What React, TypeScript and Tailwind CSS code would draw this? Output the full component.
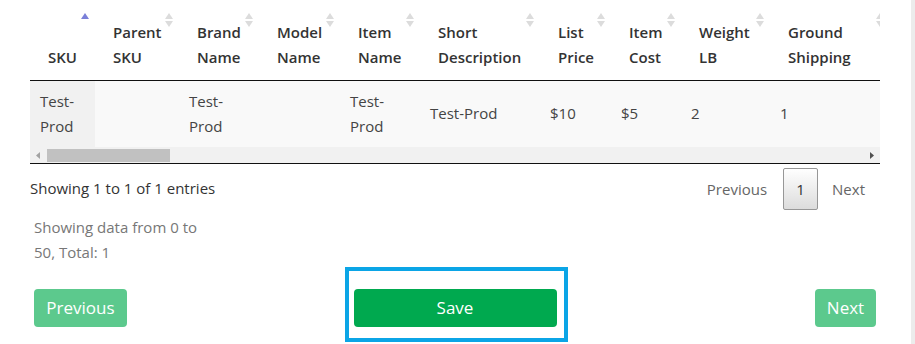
const columns = [
  { label: ['', 'SKU'], width: 'w-[65px]', active: true },
  { label: ['Parent', 'SKU'], width: 'w-[84px]' },
  { label: ['Brand', 'Name'], width: 'w-[80px]' },
  { label: ['Model', 'Name'], width: 'w-[81px]' },
  { label: ['Item', 'Name'], width: 'w-[80px]' },
  { label: ['Short', 'Description'], width: 'w-[120px]' },
  { label: ['List', 'Price'], width: 'w-[71px]' },
  { label: ['Item', 'Cost'], width: 'w-[70px]' },
  { label: ['Weight', 'LB'], width: 'w-[89px]' },
  { label: ['Ground', 'Shipping'], width: 'w-[120px]' },
];

const row: string[][] = [
  ['Test-', 'Prod'],
  [],
  ['Test-', 'Prod'],
  [],
  ['Test-', 'Prod'],
  ['Test-Prod'],
  ['$10'],
  ['$5'],
  ['2'],
  ['1'],
];

function SortIcon({ active }: { active?: boolean }) {
  if (active) {
    return (
      <svg width="8" height="14" viewBox="0 0 8 14" className="absolute right-[6px] top-[13px]">
        <path d="M4 0 L8 6 L0 6 Z" fill="#7b80d9" />
      </svg>
    );
  }
  return (
    <svg width="8" height="14" viewBox="0 0 8 14" className="absolute right-[6px] top-[13px]">
      <path d="M4 0 L8 6 L0 6 Z" fill="#dcdcdc" />
      <path d="M0 8 L8 8 L4 14 Z" fill="#dcdcdc" />
    </svg>
  );
}

export default function App() {
  return (
    <div className="flex h-[344px] w-[915px] overflow-hidden bg-white font-['Open_Sans',sans-serif] text-[15px]">
      <div className="flex-1">
        <div className="ml-[30px] w-[850px] overflow-hidden">
          <table className="w-max table-fixed border-collapse">
            <thead>
              <tr className="border-b border-[#111]">
                {columns.map((c, i) => (
                  <th
                    key={i}
                    className={`relative ${c.width} h-[80px] pb-[10px] pl-[18px] pr-[10px] text-left align-bottom font-semibold leading-[25px] text-[#333]`}
                  >
                    {c.label.map((l, j) => (
                      <div key={j}>{l}</div>
                    ))}
                    <SortIcon active={c.active} />
                  </th>
                ))}
              </tr>
            </thead>
            <tbody>
              <tr className="bg-[#f9f9f9]">
                {row.map((cell, i) => (
                  <td
                    key={i}
                    className={`h-[67px] px-[10px] py-[8px] align-middle leading-[25px] text-[#444] ${i === 0 ? 'bg-[#f1f1f1]' : ''}`}
                  >
                    {cell.map((l, j) => (
                      <div key={j}>{l}</div>
                    ))}
                  </td>
                ))}
              </tr>
            </tbody>
          </table>
          <div className="flex h-[17px] items-center border-b border-[#111] bg-[#f1f1f1]">
            <svg width="4" height="7" viewBox="0 0 4 7" className="ml-[6px]">
              <path d="M4 0 L0 3.5 L4 7 Z" fill="#a3a3a3" />
            </svg>
            <div className="ml-[7px] h-[13px] w-[123px] bg-[#c1c1c1]" />
            <div className="flex-1" />
            <svg width="4" height="7" viewBox="0 0 4 7" className="mr-[6px]">
              <path d="M0 0 L4 3.5 L0 7 Z" fill="#505050" />
            </svg>
          </div>
        </div>

        <div className="ml-[30px] mt-[4px] flex w-[850px] items-start justify-between">
          <div className="mt-[10px] leading-[20px] text-[#333]">Showing 1 to 1 of 1 entries</div>
          <div className="mr-[15px] flex items-center text-[#666]">
            <span className="px-[16px]">Previous</span>
            <span className="flex h-[42px] w-[35px] items-center justify-center rounded-[2px] border border-[#979797] bg-gradient-to-b from-white to-[#dcdcdc] text-[#333]">
              1
            </span>
            <span className="pl-[14px]">Next</span>
          </div>
        </div>

        <div className="ml-[34px] mt-[5px] w-[175px] leading-[25px] text-[#777]">
          Showing data from 0 to 50, Total: 1
        </div>

        <div className="mt-[2px] grid grid-cols-[1fr_auto_1fr] items-start pl-[34px] pr-[35px]">
          <div className="pt-[22px]">
            <button className="h-[38px] w-[93px] rounded-[4px] bg-[#5cc98d] text-[17px] font-medium text-white">
              Previous
            </button>
          </div>
          <div className="ml-[2px] border-[4px] border-[#0ba5e6] pb-[11px] pl-[5px] pr-[7px] pt-[18px]">
            <button className="block h-[38px] w-[203px] rounded-[4px] bg-[#00a94f] text-[17px] font-medium text-white">
              Save
            </button>
          </div>
          <div className="flex justify-end pt-[22px]">
            <button className="h-[38px] w-[61px] rounded-[4px] bg-[#5cc98d] text-[17px] font-medium text-white">
              Next
            </button>
          </div>
        </div>
      </div>
      <div className="w-[4px] bg-[#ececec]" />
    </div>
  );
}
